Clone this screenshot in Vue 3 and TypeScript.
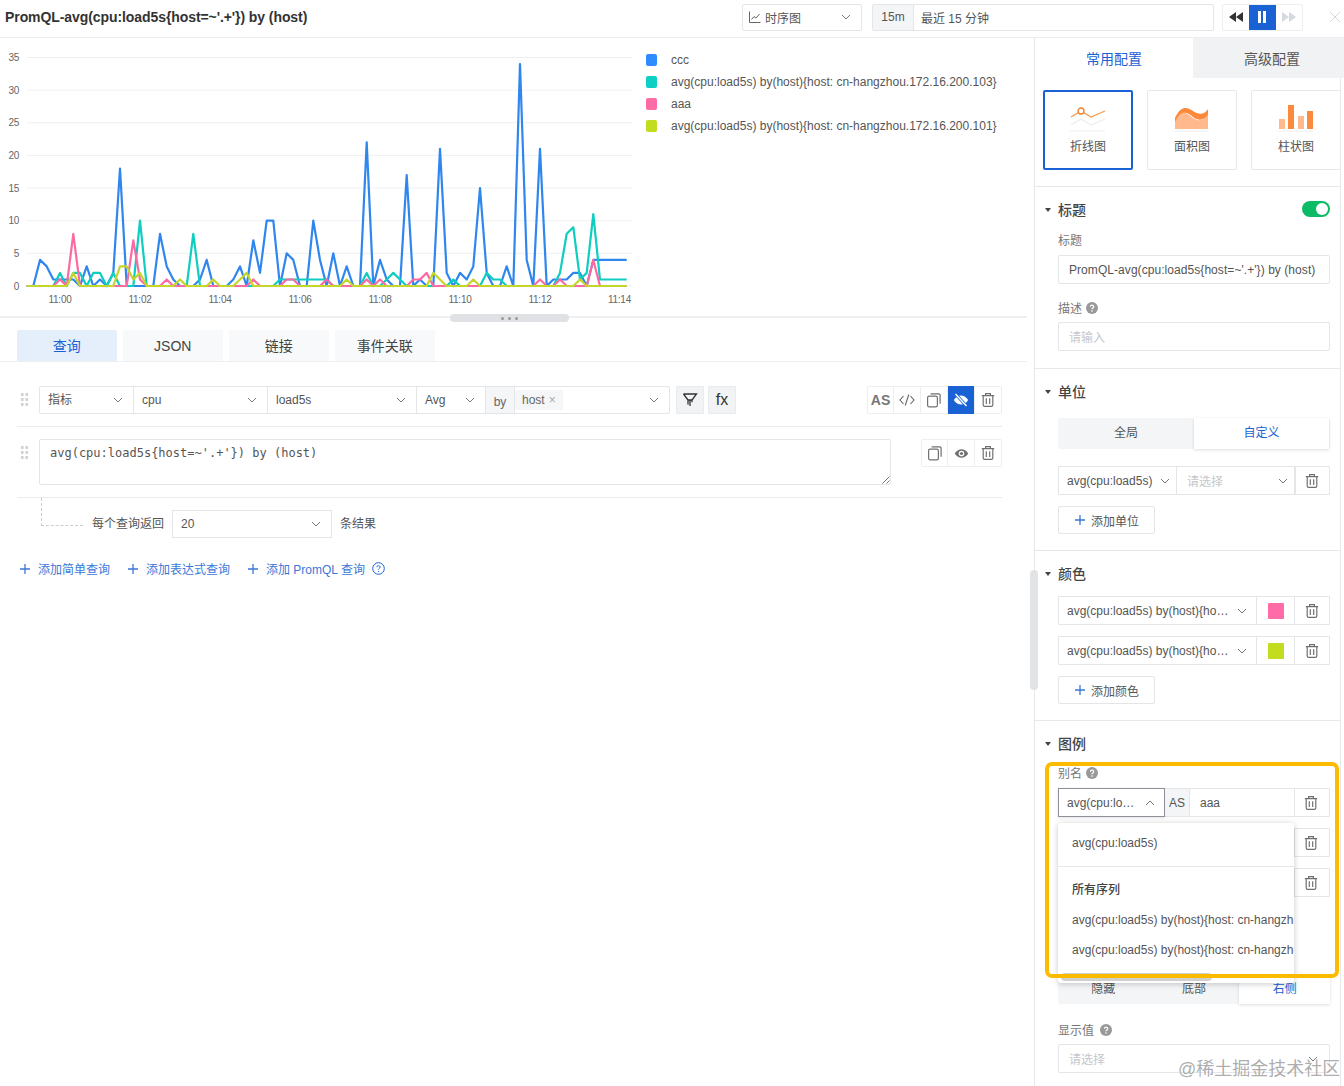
<script setup lang="ts">
const blueV = [0,0,4,3,1,1,1,1,0,3,0,1,0,2,18,0,0,0,0,0,8,3,1,0,0,0,1,4,0,0,0,1,3,0,7,2,10,10,0,5,4,0,0,10,4,0,5,0,3,0,0,22,0,4,1,0,0,17,0,1,0,0,21,2,0,2,1,3,15,2,0,0,3,0,34,4,0,21,0,1,1,1,2,2,0,4,4,4,4,4,4]
const tealV = [0,0,0,0,0,2,0,2,2,0,2,2,0,2,0,0,0,10,0,0,0,0,0,0,0,8,0,0,0,0,0,0,0,0,0,0,0,0,1,1,1,1,1,1,1,1,0,0,0,0,0,2,0,0,1,2,1,0,0,0,0,0,0,0,1,0,0,0,0,2,1,1,0,0,0,0,0,0,0,0,2,8,9,1,2,11,1,1,1,1,1]
const pinkZ: Record<number, number> = {0:1,2:8,11:7,12:1,16:1,29:1,34:1,35:1,40:1,46:1,48:1,53:1,54:1,55:2,72:1,75:1,80:4}
const limeZ: Record<number, number> = {2:2,9:3,10:3,11:1,12:2,18:1,23:1,27:1,28:2,43:1,56:2,57:1,62:1,78:1}
const keys = Array.from({ length: 91 }, (_, i) => i - 5)
const px = (k: number) => 60 + k * 6.6667
const py = (v: number) => 248 - v * 6.53
const pts = (vals: number[]) => vals.map((v, i) => `${px(i - 5).toFixed(1)},${py(v).toFixed(1)}`).join(' ')
const series = [
  { color: '#2f86ee', points: pts(blueV) },
  { color: '#0fcdbf', points: pts(tealV) },
  { color: '#fb6aa3', points: pts(keys.map(k => pinkZ[k] ?? 0)) },
  { color: '#c4d62c', points: pts(keys.map(k => limeZ[k] ?? 0)) },
]
const yTicks = [35, 30, 25, 20, 15, 10, 5, 0]
const xTicks = ['11:00', '11:02', '11:04', '11:06', '11:08', '11:10', '11:12']
const legend = [
  { color: '#2e8cff', text: 'ccc' },
  { color: '#0dcfc3', text: 'avg(cpu:load5s) by(host){host: cn-hangzhou.172.16.200.103}' },
  { color: '#ff6ba6', text: 'aaa' },
  { color: '#c2dc20', text: 'avg(cpu:load5s) by(host){host: cn-hangzhou.172.16.200.101}' },
]
const queryTabs = ['查询', 'JSON', '链接', '事件关联']
const addLinks = ['添加简单查询', '添加表达式查询', '添加 PromQL 查询']
const colorRows = ['#ff6ba6', '#c2dc20']
</script>

<template>
  <div class="page">
    <svg class="sprite" aria-hidden="true">
      <symbol id="chev" viewBox="0 0 12 12"><path d="M2 4l4 4 4-4" fill="none" stroke="currentColor" stroke-width="1"/></symbol>
      <symbol id="trash" viewBox="0 0 16 16"><path d="M1.800 3.600h12.400M5.600 3.400V1.600h4.800v1.800M3.200 3.800v9c0 .9.600 1.600 1.500 1.600h6.600c.9 0 1.500-.7 1.500-1.600v-9M6.300 6.200v5.800M9.700 6.200v5.800" fill="none" stroke="currentColor" stroke-width="1.200"/></symbol>
      <symbol id="copy" viewBox="0 0 16 16"><rect x="1.600" y="4.200" width="9.800" height="10.600" rx="1.600" fill="none" stroke="currentColor" stroke-width="1.200"/><path d="M4.600 1.800h8.200c.8 0 1.300.5 1.300 1.300v8.700" fill="none" stroke="currentColor" stroke-width="1.200"/></symbol>
      <symbol id="plus" viewBox="0 0 12 12"><path d="M6 1v10M1 6h10" fill="none" stroke="currentColor" stroke-width="1.300"/></symbol>
      <symbol id="help" viewBox="0 0 12 12"><circle cx="6" cy="6" r="6" fill="currentColor"/><path d="M4.400 4.800c0-2.100 3.300-2.100 3.300-.1 0 1.300-1.700 1.200-1.700 2.600" fill="none" stroke="#fff" stroke-width="1.200"/><circle cx="6" cy="9" r=".8" fill="#fff"/></symbol>
      <symbol id="eye" viewBox="0 0 16 16"><path d="M.8 8C3 4.600 5.400 3.400 8 3.400s5 1.200 7.200 4.600C13 11.400 10.600 12.600 8 12.600S3 11.400.8 8z" fill="currentColor"/><circle cx="8" cy="8" r="3" fill="#fff"/><circle cx="8" cy="8" r="1.700" fill="currentColor"/></symbol>
    </svg>

    <header class="topbar">
      <div class="page-title">PromQL-avg(cpu:load5s{host=~'.+'}) by (host)</div>
      <div class="type-select">
        <svg class="line-ico" width="12" height="12" viewBox="0 0 12 12"><path d="M.5.5v11h11M2.500 8.500l2.500-3 2 1.600 3.500-4" fill="none" stroke="#666" stroke-width="1"/></svg>
        <span>时序图</span>
        <svg class="chev"><use href="#chev"/></svg>
      </div>
      <div class="time-box">
        <span class="time-short">15m</span>
        <span class="time-long">最近 15 分钟</span>
      </div>
      <div class="play-group">
        <span class="play-btn"><svg width="14" height="10" viewBox="0 0 14 10"><path d="M7 0v10L0 5zM14 0v10L7 5z" fill="#333"/></svg></span>
        <span class="play-btn on"><svg width="10" height="12" viewBox="0 0 10 12"><path d="M1 0h3v12H1zM6 0h3v12H6z" fill="#fff"/></svg></span>
        <span class="play-btn"><svg width="14" height="10" viewBox="0 0 14 10"><path d="M0 0v10l7-5zM7 0v10l7-5z" fill="#d5d8dc"/></svg></span>
      </div>
      <svg class="close" width="12" height="12" viewBox="0 0 12 12"><path d="M1 1l10 10M11 1L1 11" stroke="#d6d6d6" fill="none"/></svg>
    </header>

    <div class="body">
      <main class="left">
        <section class="chart-section">
          <svg class="chart" width="640" height="278" viewBox="0 0 640 278">
            <g v-for="t in yTicks" :key="t">
              <line x1="27" x2="632" :y1="py(t)" :y2="py(t)" stroke="#eef0f3"/>
              <text class="tick" x="19" :y="py(t) + 3.5" text-anchor="end">{{ t }}</text>
            </g>
            <text v-for="(t, i) in xTicks" :key="t" class="tick" :x="60 + i * 80" y="265" text-anchor="middle">{{ t }}</text>
            <text class="tick" x="631" y="265" text-anchor="end">11:14</text>
            <polyline v-for="s in series" :key="s.color" :points="s.points" fill="none" :stroke="s.color" stroke-width="2.200" stroke-linejoin="round"/>
          </svg>
          <ul class="legend">
            <li v-for="l in legend" :key="l.text"><i :style="{ background: l.color }"></i>{{ l.text }}</li>
          </ul>
          <div class="h-grip"><b></b><b></b><b></b></div>
        </section>

        <nav class="q-tabs">
          <span v-for="(t, i) in queryTabs" :key="t" class="q-tab" :class="{ on: i === 0, latin: t === 'JSON' }">{{ t }}</span>
        </nav>

        <div class="q-body">
          <div class="q-row first">
            <span class="drag"></span>
            <div class="seg">
              <span class="sel w94 cjk">指标<svg class="chev"><use href="#chev"/></svg></span>
              <span class="sel w134">cpu<svg class="chev"><use href="#chev"/></svg></span>
              <span class="sel w149">load5s<svg class="chev"><use href="#chev"/></svg></span>
              <span class="sel w69">Avg<svg class="chev"><use href="#chev"/></svg></span>
              <span class="by">by</span>
              <span class="sel hostsel"><span class="tag">host <em>×</em></span><svg class="chev"><use href="#chev"/></svg></span>
            </div>
            <span class="sq ml6"><svg width="16" height="16" viewBox="0 0 16 16"><path d="M1.500 2h13L10 8v2.200M6 12.500V8L1.500 2M6 8h4M8 8v6" fill="none" stroke="#333" stroke-width="1.300"/></svg></span>
            <span class="sq ml4 fx">fx</span>
            <div class="actions ml-auto">
              <span class="as">AS</span>
              <span class="act"><svg width="16" height="14" viewBox="0 0 16 14"><path d="M4.500 3L1 7l3.500 4M11.500 3L15 7l-3.500 4M9.800 1.500L6.200 12.500" fill="none" stroke="#666" stroke-width="1.100"/></svg></span>
              <span class="act"><svg width="16" height="16"><use href="#copy"/></svg></span>
              <span class="act blue"><svg width="16" height="14" viewBox="0 0 16 14"><path d="M.8 7C3 3.600 5.400 2.400 8 2.400s5 1.200 7.200 4.600C13 10.400 10.600 11.600 8 11.600S3 10.400.8 7z" fill="#fff"/><path d="M2.500 1l11 12" stroke="#1a62d4" stroke-width="3"/><path d="M2.500 1l11 12" stroke="#fff" stroke-width="1.400"/></svg></span>
              <span class="act"><svg width="16" height="16"><use href="#trash"/></svg></span>
            </div>
          </div>

          <div class="q-row second">
            <span class="drag"></span>
            <div class="code">avg(cpu:load5s{host=~'.+'}) by (host)
              <svg class="resize" width="8" height="8" viewBox="0 0 8 8"><path d="M7.500 .5l-7 7M7.500 4.500l-3 3" stroke="#777" fill="none"/></svg>
            </div>
            <div class="actions ml-auto">
              <span class="act"><svg width="16" height="16"><use href="#copy"/></svg></span>
              <span class="act"><svg width="15" height="15"><use href="#eye"/></svg></span>
              <span class="act"><svg width="16" height="16"><use href="#trash"/></svg></span>
            </div>
          </div>

          <div class="limit-row">
            <span class="elbow"></span>
            <span class="limit-t">每个查询返回</span>
            <span class="sel limit-sel">20<svg class="chev"><use href="#chev"/></svg></span>
            <span class="limit-t after">条结果</span>
          </div>

          <div class="add-row">
            <span v-for="a in addLinks" :key="a" class="add-link"><svg width="12" height="12"><use href="#plus"/></svg>{{ a }}</span>
            <svg class="q-help" width="13" height="13" viewBox="0 0 13 13"><circle cx="6.500" cy="6.500" r="5.800" fill="none" stroke="#1a62d4"/><path d="M4.900 5.200c0-2 3.200-2 3.200 0 0 1.300-1.600 1.100-1.600 2.500" fill="none" stroke="#1a62d4"/><circle cx="6.500" cy="9.600" r=".7" fill="#1a62d4"/></svg>
          </div>
        </div>
      </main>

      <aside class="right">
        <div class="r-tabs">
          <span class="r-tab on">常用配置</span>
          <span class="r-tab">高级配置</span>
        </div>
        <div class="r-content">
          <div class="cards">
            <div class="card selected">
              <svg width="36" height="28" viewBox="0 0 36 28"><path d="M1 21l10-6 10 6 14-6" fill="none" stroke="#ececec" stroke-width="1.200"/><path d="M1 13l10-6 10 6 14-6" fill="none" stroke="#f59a4c" stroke-width="1.300"/><circle cx="11" cy="7" r="3" fill="#fff" stroke="#f27f2a" stroke-width="1.300"/><path d="M0 27h35" stroke="#eee"/></svg>
              <span>折线图</span>
            </div>
            <div class="card">
              <svg width="36" height="28" viewBox="0 0 36 28"><path d="M1 25V14c6-10 12-5 18 0 6 4 11 3 15-4v15z" fill="#ffb98c"/><path d="M1 14C7 1 13 3 19 7c6 4 11 4 15-2v6c-5 6-10 6-15 2-6-5-12-8-18 5z" fill="#fb8a3c"/><path d="M0 27h35" stroke="#eee"/></svg>
              <span>面积图</span>
            </div>
            <div class="card">
              <svg width="36" height="28" viewBox="0 0 36 28"><path d="M1 15h6v10H1zM20 12h6v13h-6z" fill="#ffb98c"/><path d="M10 1h6v24h-6zM29 7h6v18h-6z" fill="#fb8a3c"/><path d="M0 27h35" stroke="#eee"/></svg>
              <span>柱状图</span>
            </div>
          </div>

          <section class="sec first-sec">
            <div class="sec-head"><i class="caret"></i>标题<span class="toggle"><b></b></span></div>
            <div class="f-label l1">标题</div>
            <div class="input t1">PromQL-avg(cpu:load5s{host=~'.+'}) by (host)</div>
            <div class="f-label l2">描述<svg class="help"><use href="#help"/></svg></div>
            <div class="input ph t2">请输入</div>
          </section>

          <section class="sec">
            <div class="sec-head"><i class="caret"></i>单位</div>
            <div class="radio two r-unit"><span>全局</span><span class="on">自定义</span></div>
            <div class="cfg-row u-row">
              <span class="cfg w118">avg(cpu:load5s)<svg class="chev"><use href="#chev"/></svg></span>
              <span class="cfg w118 ph">请选择<svg class="chev"><use href="#chev"/></svg></span>
              <span class="cfg-trash"><svg width="16" height="16"><use href="#trash"/></svg></span>
            </div>
            <div class="add-btn"><svg width="12" height="12"><use href="#plus"/></svg>添加单位</div>
          </section>

          <section class="sec">
            <div class="sec-head"><i class="caret"></i>颜色</div>
            <div v-for="c in colorRows" :key="c" class="cfg-row c-row">
              <span class="cfg w199"><span class="ellip">avg(cpu:load5s) by(host){ho…</span><svg class="chev"><use href="#chev"/></svg></span>
              <span class="swatch-cell"><i :style="{ background: c }"></i></span>
              <span class="cfg-trash"><svg width="16" height="16"><use href="#trash"/></svg></span>
            </div>
            <div class="add-btn"><svg width="12" height="12"><use href="#plus"/></svg>添加颜色</div>
          </section>

          <section class="sec last">
            <div class="sec-head"><i class="caret"></i>图例</div>
            <div class="f-label l3">别名<svg class="help"><use href="#help"/></svg></div>
            <div class="cfg-row a-row">
              <span class="cfg w106 open">avg(cpu:lo…<svg class="chev up"><use href="#chev"/></svg></span>
              <span class="as-cell">AS</span>
              <span class="alias">aaa</span>
              <span class="cfg-trash"><svg width="16" height="16"><use href="#trash"/></svg></span>
            </div>
            <div class="cfg-row a-row"><span class="alias grow"></span><span class="cfg-trash"><svg width="16" height="16"><use href="#trash"/></svg></span></div>
            <div class="cfg-row a-row"><span class="alias grow"></span><span class="cfg-trash"><svg width="16" height="16"><use href="#trash"/></svg></span></div>
            <div class="radio three r-pos"><span>隐藏</span><span>底部</span><span class="on">右侧</span></div>
            <div class="f-label l4">显示值<svg class="help wide"><use href="#help"/></svg></div>
            <div class="input ph t3">请选择<svg class="chev end"><use href="#chev"/></svg></div>

            <div class="dropdown">
              <div class="dd-item d1">avg(cpu:load5s)</div>
              <div class="dd-group">所有序列</div>
              <div class="dd-item">avg(cpu:load5s) by(host){host: cn-hangzhou.172.16.200.103}</div>
              <div class="dd-item">avg(cpu:load5s) by(host){host: cn-hangzhou.172.16.200.101}</div>
              <div class="dd-thumb"></div>
            </div>
            <div class="highlight"></div>
          </section>
        </div>
      </aside>
    </div>

    <div class="v-grip"></div>
    <div class="watermark">@稀土掘金技术社区</div>
  </div>
</template>

<style>
html, body { margin: 0; background: #fff; }
</style>

<style scoped>
* { box-sizing: border-box; }
.page { position: relative; width: 1344px; height: 1086px; overflow: hidden; background: #fff; color: #4a4f55; font: 12px "Liberation Sans", "Noto Sans CJK SC", sans-serif; }
.sprite { position: absolute; width: 0; height: 0; }
.chev { width: 12px; height: 12px; color: #777; flex: none; }
.chev.up { transform: rotate(180deg); }

.topbar { display: flex; align-items: center; height: 38px; border-bottom: 1px solid #ebedf0; padding: 0 0 3px 5px; }
.page-title { font-size: 14px; font-weight: 700; color: #333; letter-spacing: -.08px; margin-right: auto; }
.type-select { display: flex; align-items: center; width: 120px; height: 27px; border: 1px solid #e3e5e8; border-radius: 2px; padding: 0 9px 0 6px; color: #555; }
.type-select span { margin-left: 4px; }
.type-select .chev { margin-left: auto; }
.time-box { display: flex; align-items: center; width: 342px; height: 27px; margin-left: 10px; border: 1px solid #e3e5e8; border-radius: 2px; color: #555; }
.time-short { width: 41px; height: 100%; background: #f3f5f7; display: flex; align-items: center; justify-content: center; border-right: 1px solid #e3e5e8; }
.time-long { margin-left: 7px; }
.play-group { display: flex; width: 81px; height: 27px; margin-left: 8px; border: 1px solid #eceef0; border-radius: 2px; }
.play-btn { flex: 1; display: flex; align-items: center; justify-content: center; }
.play-btn.on { background: #1a62d4; }
.close { margin: 0 3px 0 26px; }

.body { display: flex; height: 1048px; }
.left { width: 1034px; flex: none; padding-right: 7px; }
.chart-section { position: relative; display: flex; height: 280px; border-bottom: 2px solid #eeeff1; }
.chart { flex: none; display: block; }
.tick { font-size: 10px; fill: #666; letter-spacing: -.25px; }
.legend { list-style: none; margin: 11px 0 0 6px; padding: 0; color: #555; }
.legend li { display: flex; align-items: center; height: 22px; white-space: nowrap; }
.legend i { width: 11px; height: 12px; border-radius: 2px; margin-right: 14px; }
.h-grip { position: absolute; left: 450px; top: 276px; width: 119px; height: 8px; border-radius: 4px; background: #dfe1e4; display: flex; align-items: center; justify-content: center; gap: 4px; }
.h-grip b { width: 3px; height: 3px; border-radius: 50%; background: #999; }

.q-tabs { display: flex; gap: 6.500px; height: 44px; padding: 12px 0 0 17px; border-bottom: 1px solid #eeeff1; }
.q-tab { width: 99.500px; height: 31px; display: flex; align-items: center; justify-content: center; padding-bottom: 2px; font-size: 14px; color: #444; background: #f8f9fb; border-radius: 2px 2px 0 0; }
.q-tab.latin { padding-bottom: 0; }
.q-tab.on { background: #e5eefb; color: #1a62d4; }

.q-body { padding: 0 25px 0 17px; }
.q-row { display: flex; align-items: flex-start; border-bottom: 1px solid #e9ebee; }
.q-row.first { padding: 24px 0 12px 0; }
.q-row.second { padding: 12px 0 12px 0; height: 71px; }
.drag { width: 9px; height: 15px; margin: 6px 10px 0 3px; flex: none; background-image: radial-gradient(circle, #cfd2d6 1.400px, transparent 1.600px); background-size: 4.500px 5px; }
.seg { display: flex; width: 631px; height: 28px; border: 1px solid #e3e5e8; border-radius: 2px; }
.sel { display: flex; align-items: center; justify-content: space-between; padding: 0 9px 0 8px; border-right: 1px solid #e3e5e8; color: #555; flex: none; }
.sel.cjk { padding-bottom: 3px; }
.sel.cjk .chev { margin-bottom: -3px; }
.w94 { width: 94px; } .w134 { width: 134px; } .w149 { width: 149px; } .w69 { width: 69px; }
.by { width: 29px; flex: none; background: #f5f6f8; border-right: 1px solid #e3e5e8; display: flex; align-items: center; justify-content: center; padding-top: 3px; color: #666; }
.hostsel { border-right: 0; flex: 1; padding: 0 9px 0 0; }
.tag { height: 20px; display: flex; align-items: center; gap: 4px; padding: 0 7px; background: #f5f6f8; color: #666; }
.tag em { font-style: normal; color: #aaa; }
.sq { width: 28px; height: 28px; flex: none; background: #f2f3f5; border: 1px solid #e9ebee; display: flex; align-items: center; justify-content: center; }
.ml6 { margin-left: 6px; } .ml4 { margin-left: 4px; }
.fx { font-size: 16px; color: #333; }
.ml-auto { margin-left: auto; }
.actions { display: flex; height: 28px; border-top: 1px solid #eceef0; border-bottom: 1px solid #eceef0; border-radius: 2px; }
.act, .as { width: 27px; display: flex; align-items: center; justify-content: center; color: #707070; border-right: 1px solid #eceef0; }
.actions > :first-child { border-left: 1px solid #eceef0; }
.as { font-size: 14px; font-weight: 700; color: #777; }
.act.blue { background: #1a62d4; margin: -1px 0; }
.code { position: relative; width: 852px; height: 46px; border: 1px solid #e3e5e8; border-radius: 2px; padding: 6px 10px; font: 12px/14px "DejaVu Sans Mono", "Liberation Mono", monospace; color: #555; white-space: pre-line; }
.resize { position: absolute; right: 0; bottom: 0; }
.limit-row { position: relative; display: flex; align-items: center; height: 40px; padding: 12px 0 0 75px; }
.elbow { position: absolute; left: 24px; top: 0; width: 42px; height: 28px; border-left: 1px dashed #c9ccd0; border-bottom: 1px dashed #c9ccd0; }
.limit-t { color: #555; padding-bottom: 4px; }
.limit-t.after { margin-left: 8px; }
.limit-sel { width: 160px; height: 28px; margin-left: 8px; border: 1px solid #e3e5e8; padding-bottom: 1px; }
.add-row { display: flex; align-items: center; margin-top: 22px; padding-left: 2px; color: #3a78d8; }
.add-link { display: flex; align-items: center; gap: 7px; margin-right: 17px; }
.q-help { margin-left: -10px; }

.right { position: relative; width: 310px; flex: none; border-left: 1px solid #e6e8eb; }
.r-tabs { display: flex; height: 40px; }
.r-tab { display: flex; align-items: center; justify-content: center; width: 158px; font-size: 14px; background: #f0f2f4; color: #555; flex: none; }
.r-tab.on { background: #fff; color: #1a62d4; }
.r-content { width: 306px; height: 1010px; border-right: 1px solid #e6e8eb; }
.cards { display: flex; gap: 14px; padding: 12px 0 16px 8px; border-bottom: 1px solid #e6e8eb; }
.card { width: 90px; height: 80px; flex: none; border: 1px solid #e6e8eb; border-radius: 2px; display: flex; flex-direction: column; align-items: center; padding-top: 13px; color: #555; }
.card span { margin-top: 5px; }
.card.selected { border: 2px solid #1a62d4; padding-top: 12px; }

.sec { position: relative; padding: 13px 10px 16px 23px; border-bottom: 1px solid #e6e8eb; }
.first-sec { padding-bottom: 17px; }
.sec.last { border-bottom: 0; }
.sec-head { position: relative; display: flex; align-items: center; height: 20px; padding-bottom: 2px; font-size: 14px; font-weight: 500; color: #444; }
.caret { position: absolute; left: -13px; top: 8px; border: 3.500px solid transparent; border-top: 4px solid #444; border-bottom: 0; }
.toggle { position: relative; margin-left: auto; width: 28px; height: 16px; border-radius: 8px; background: #0dbb66; }
.toggle b { position: absolute; right: 2px; top: 2px; width: 12px; height: 12px; border-radius: 50%; background: #fff; }
.f-label { display: flex; align-items: center; height: 16px; padding-bottom: 3px; color: #777; }
.help { width: 12px; height: 12px; margin-left: 4px; color: #999; }
.help.wide { margin-left: 6px; }
.l1 { margin-top: 13px; } .l2 { margin-top: 17px; } .l3 { margin-top: 12px; } .l4 { margin-top: 19px; }
.input { display: flex; align-items: center; height: 29px; border: 1px solid #e3e5e8; border-radius: 2px; padding: 0 10px; color: #555; white-space: nowrap; }
.input.t1 { margin-top: 6px; letter-spacing: .06px; } .input.t2 { margin-top: 5px; } .input.t3 { margin-top: 5px; }
.ph { color: #c4c7cb !important; }
.chev.end { margin-left: auto; }
.radio { display: grid; height: 31px; background: #f3f5f7; border-radius: 2px; color: #555; }
.radio.two { grid-template-columns: 136px 135px; }
.radio.three { grid-template-columns: repeat(3, 1fr); }
.radio span { display: flex; align-items: center; justify-content: center; padding-bottom: 3px; }
.radio.two span { padding-bottom: 4px; }
.radio .on { background: #fff; color: #1a62d4; box-shadow: 0 1px 3px rgba(0,0,0,.14); }
.r-unit { margin-top: 16px; }
.r-pos { margin-top: 76px; }
.cfg-row { display: flex; height: 29px; border: 1px solid #e3e5e8; border-radius: 1px; }
.u-row { margin-top: 17px; }
.c-row { margin-top: 12px; }
.c-row + .c-row { margin-top: 11px; }
.a-row { margin-top: 11px; }
.l3 + .a-row { margin-top: 6px; }
.cfg { display: flex; align-items: center; justify-content: space-between; padding: 0 8px; color: #555; border-right: 1px solid #e3e5e8; flex: none; white-space: nowrap; }
.w118 { width: 118px; }
.w118.ph { padding-left: 10px; }
.w199 { width: 198px; }
.w106 { width: 106px; }
.ellip { overflow: hidden; text-overflow: ellipsis; }
.cfg.open { margin: -1px 0 -1px -1px; border: 1px solid #8d9096; width: 107px; box-shadow: 0 1px 3px rgba(0,0,0,.1); }
.cfg-trash { width: 35px; margin-left: auto; padding-right: 2px; display: flex; align-items: center; justify-content: center; color: #707070; flex: none; border-left: 1px solid #e3e5e8; }
.cfg > .chev { margin-left: 2px; }
.w118 .chev { margin-right: -3px; }
.as-cell { width: 25px; display: flex; align-items: center; justify-content: center; background: #f3f5f7; color: #555; border-right: 1px solid #e3e5e8; flex: none; }
.alias { flex: 1; display: flex; align-items: center; padding-left: 10px; color: #555; }
.swatch-cell { width: 37px; flex: none; display: flex; align-items: center; justify-content: center; }
.swatch-cell i { width: 16px; height: 16px; border-radius: 1px; }
.c-row .cfg-trash { width: 36px; }
.add-btn { display: flex; align-items: center; justify-content: center; gap: 5px; width: 97px; height: 28px; margin-top: 11px; border: 1px solid #e3e5e8; border-radius: 2px; color: #555; }
.add-btn svg, .add-link svg { color: #3a78d8; }

.dropdown { position: absolute; left: 23px; top: 102px; width: 236px; height: 160px; overflow: hidden; background: #fff; border-radius: 3px; box-shadow: 0 1px 6px rgba(0,0,0,.22); color: #555; z-index: 2; white-space: nowrap; }
.dd-item { height: 30px; line-height: 30px; padding-left: 14px; }
.dd-item.d1 { height: 44px; line-height: 40px; border-bottom: 1px solid #e6e8eb; }
.dd-group { height: 38px; line-height: 46px; padding-left: 14px; font-weight: 500; color: #444; }
.dd-thumb { position: absolute; left: 3px; top: 150px; width: 151px; height: 8px; border-radius: 4px; background: #cfcfcf; }
.highlight { position: absolute; left: 10px; top: 41px; width: 294px; height: 216px; border: 4px solid #fdbb00; border-radius: 7px; z-index: 3; pointer-events: none; }

.v-grip { position: absolute; left: 1030px; top: 570px; width: 8px; height: 120px; border-radius: 4px; background: #e2e3e5; }
.watermark { position: absolute; left: 1178px; top: 1057px; font-size: 18px; line-height: 24px; color: rgba(120,120,120,.62); text-shadow: 0 0 2px #fff; white-space: nowrap; }
</style>
